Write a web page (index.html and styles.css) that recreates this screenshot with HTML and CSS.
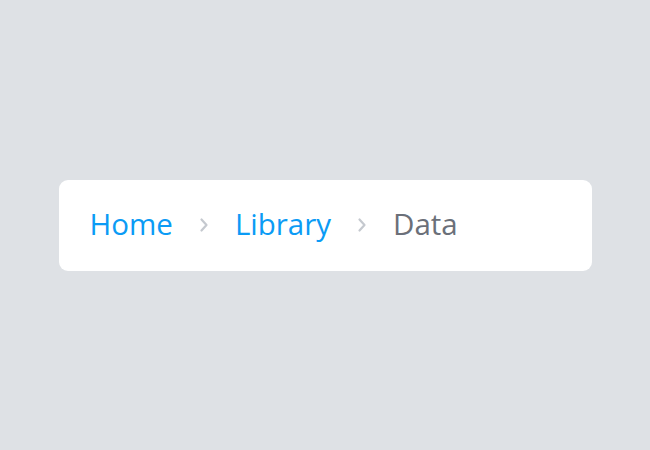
FILE: index.html
```html
<!DOCTYPE html>
<html>
<head>
<meta charset="utf-8">
<link rel="stylesheet" href="styles.css">
</head>
<body>
<nav class="breadcrumb">
  <a class="crumb link" href="#">Home</a>
  <svg class="sep" viewBox="0 0 10 16" width="10" height="16"><path d="M2.5 2.5 L7.5 8 L2.5 13.5" fill="none" stroke="#c5c9cf" stroke-width="2.2" stroke-linecap="round" stroke-linejoin="round"/></svg>
  <a class="crumb link" href="#">Library</a>
  <svg class="sep" viewBox="0 0 10 16" width="10" height="16"><path d="M2.5 2.5 L7.5 8 L2.5 13.5" fill="none" stroke="#c5c9cf" stroke-width="2.2" stroke-linecap="round" stroke-linejoin="round"/></svg>
  <span class="crumb current">Data</span>
</nav>
</body>
</html>
```
FILE: styles.css
```css
html, body {
  margin: 0;
  height: 100%;
}
body {
  background: #dee1e5;
  display: flex;
  align-items: center;
  justify-content: center;
  font-family: "Open Sans", "Noto Sans", sans-serif;
}
.breadcrumb {
  box-sizing: border-box;
  width: 533px;
  height: 91px;
  background: #ffffff;
  border-radius: 9px;
  padding: 0 31px 3px;
  display: flex;
  align-items: center;
  gap: 26px;
}
.crumb {
  font-size: 29.5px;
  font-weight: 500;
  line-height: 1;
  text-decoration: none;
}
.link {
  color: #0b9bf5;
}
.current {
  color: #6b7079;
}
.sep {
  display: block;
  margin-top: 3px;
}
```
